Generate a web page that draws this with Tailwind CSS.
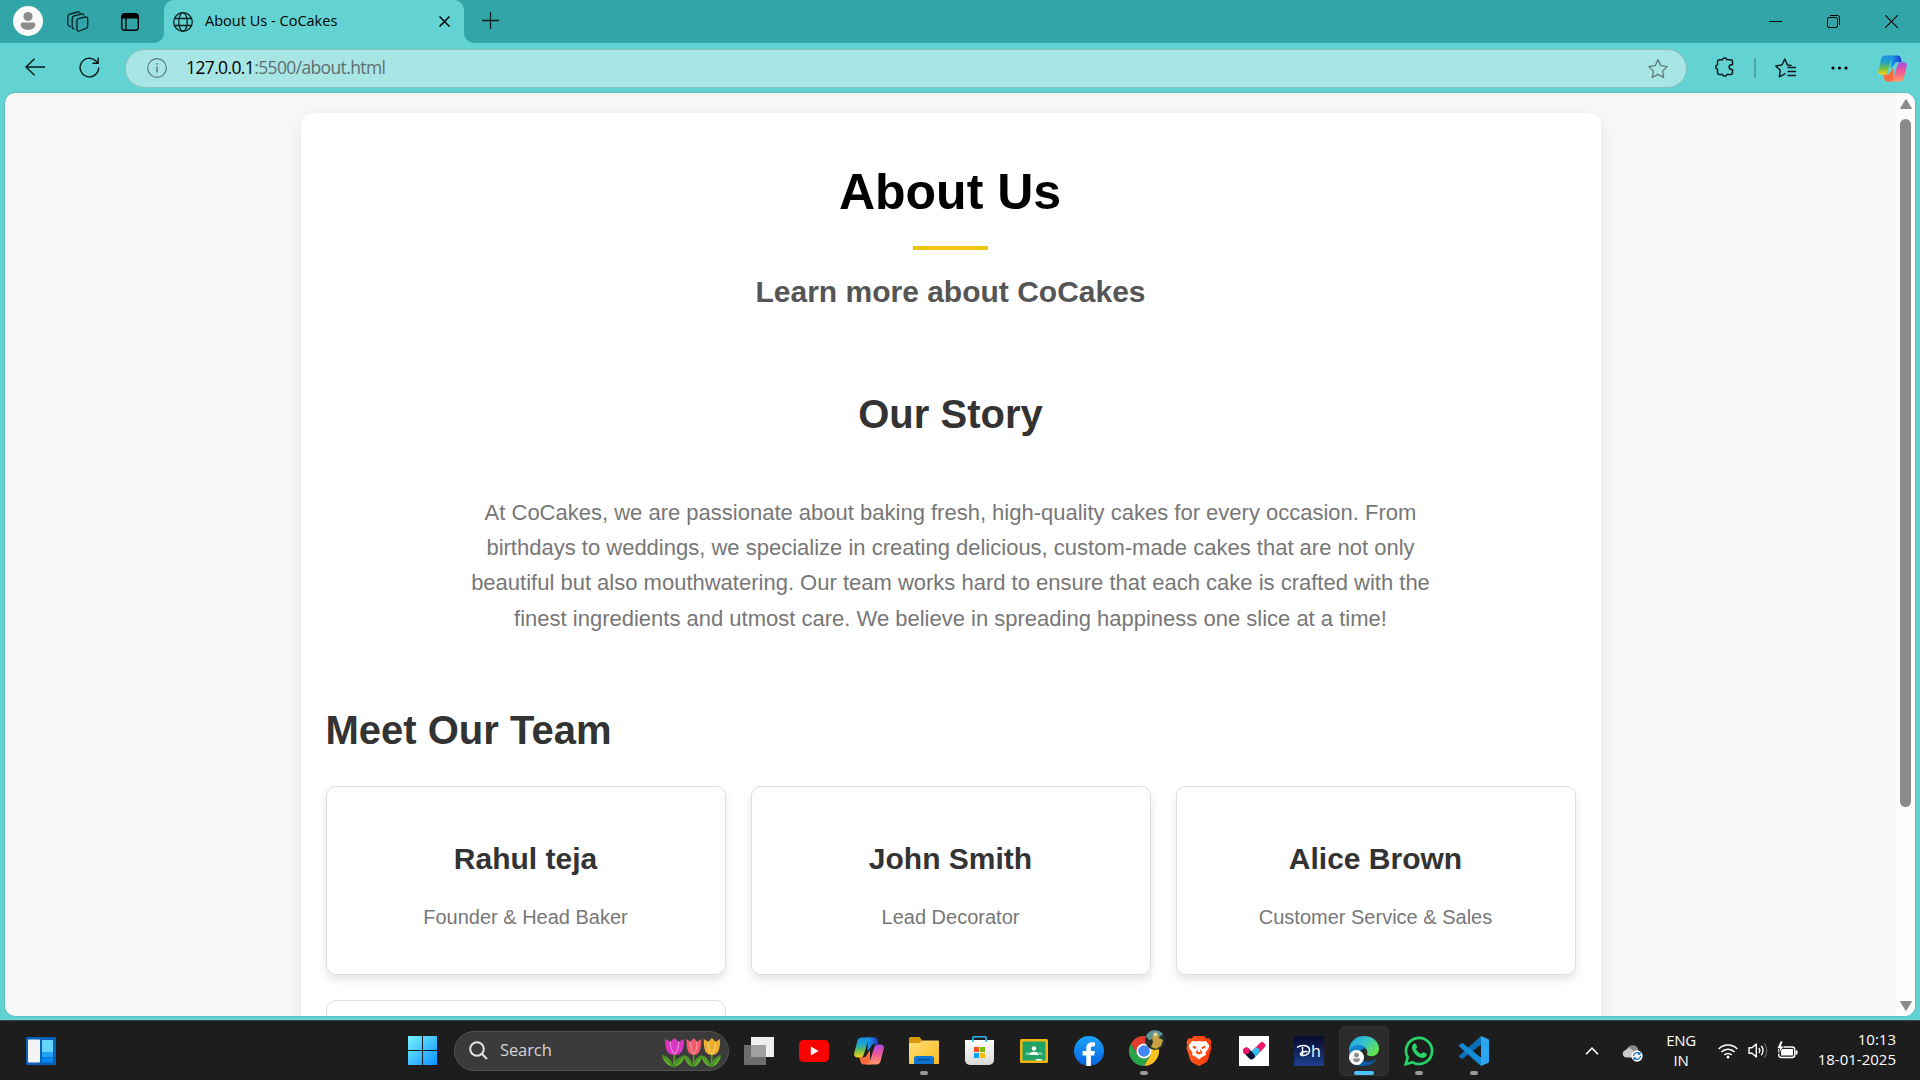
<!DOCTYPE html>
<html lang="en">
<head>
<meta charset="utf-8">
<title>About Us - CoCakes</title>
<script src="https://cdn.jsdelivr.net/npm/@tailwindcss/browser@4"></script>
</head>
<body class="w-[1920px] h-[1080px] overflow-hidden flex flex-col bg-[#63d2d2] font-['Open_Sans',sans-serif]">
<svg class="absolute w-0 h-0">
  <defs>
    <linearGradient id="cA" x1="0" y1="0" x2="0" y2="1"><stop offset="0" stop-color="#1a8fe8"/><stop offset=".35" stop-color="#1fa3c8"/><stop offset=".65" stop-color="#6cbf4a"/><stop offset="1" stop-color="#ffd21a"/></linearGradient>
    <linearGradient id="cB" x1="0" y1="0" x2="0" y2="1"><stop offset="0" stop-color="#a24bea"/><stop offset=".45" stop-color="#f0559a"/><stop offset="1" stop-color="#ff9a66"/></linearGradient>
    <linearGradient id="cC" x1="0" y1="0" x2="1" y2="0"><stop offset="0" stop-color="#1c9cf0"/><stop offset="1" stop-color="#1a35c4"/></linearGradient>
    <linearGradient id="win" gradientUnits="userSpaceOnUse" x1="0" y1="0" x2="29" y2="29"><stop offset="0" stop-color="#78f2ff"/><stop offset="1" stop-color="#0a93ff"/></linearGradient>
    <linearGradient id="fold" x1="0" y1="0" x2="1" y2="1"><stop offset="0" stop-color="#ffe07a"/><stop offset="1" stop-color="#fcb91c"/></linearGradient>
    <linearGradient id="fb" x1="0" y1="0" x2="0" y2="1"><stop offset="0" stop-color="#19a5fb"/><stop offset="1" stop-color="#0862e0"/></linearGradient>
    <linearGradient id="dh" x1="0" y1="0" x2="0" y2="1"><stop offset="0" stop-color="#060a2c"/><stop offset="1" stop-color="#1d3f90"/></linearGradient>
    <linearGradient id="edge" x1="0" y1="0" x2="1" y2=".6"><stop offset="0" stop-color="#1b9de2"/><stop offset=".5" stop-color="#35c3cf"/><stop offset="1" stop-color="#63e34e"/></linearGradient>
    <linearGradient id="bag" x1="0" y1="0" x2="0" y2="1"><stop offset="0" stop-color="#fff"/><stop offset="1" stop-color="#d8d8d8"/></linearGradient>
    <linearGradient id="brave" x1="0" y1="0" x2="1" y2="0"><stop offset="0" stop-color="#ff5a1f"/><stop offset="1" stop-color="#ff3a05"/></linearGradient>
    <symbol id="copilot" viewBox="0 0 30 28">
      <path d="M14 .5h6.500c2 0 2.500 1 3 2.800l1.100 4h-4.400c-1.700 0-2.600.8-3.200 2.500L13.500 14z" fill="url(#cC)"/>
      <path d="M16 27.500H10c-2.300 0-3-1.200-3.500-3l-1.200-4.200h4.400c1.700 0 2.600-.8 3.100-2.500L16 13z" fill="#ff6a3c"/>
      <path d="M7.500.5h10.200c-2 0-2.900 1.200-3.500 3l-4.400 14c-.6 1.900-1.500 3-3.600 3H3.400C.8 20.500-.3 18.400.3 16l3-11.800C3.900 1.800 5.200.5 7.500.5z" fill="url(#cA)"/>
      <path d="M22.500 27.500H12.300c2 0 2.900-1.200 3.500-3l4.400-14c.6-1.900 1.500-3 3.600-3h2.800c2.600 0 3.700 2.100 3.100 4.500l-3 11.800c-.6 2.400-1.900 3.700-4.200 3.700z" fill="url(#cB)"/>
    </symbol>
    <symbol id="tulip" viewBox="0 0 22 32" preserveAspectRatio="none">
      <path d="M12 16c0 6-.5 11-1 15" stroke="#4f9a25" stroke-width="2" fill="none"/>
      <path d="M11 31C4 29 1 24 0 18c5 1 9 5 11 13zM11 31c1-7 5-11 11-13-1 7-4 11-11 13z" fill="#62a82d"/>
      <path d="M11 31C8 26 5 22 0 18M11 31c3-5 6-9 11-13" stroke="#2f7a1c" fill="none"/>
      <path d="M12 18C5 18 3 13 3 1l5 3 4-4 4 4 5-3c0 12-2 17-9 17z" fill="currentColor"/>
      <path d="M8 4c0 6 1 10 4 13 3-3 4-7 4-13" stroke="#fff" stroke-opacity=".45" fill="none"/>
    </symbol>
  </defs>
</svg>

<!-- Tab strip -->
<header class="h-[43px] shrink-0 bg-[#31a5a8] flex items-start">
  <div class="w-[164px] h-full flex items-center pl-[13px] relative">
    <svg class="size-[30px] -mt-px" viewBox="0 0 30 30"><circle cx="15" cy="15" r="15" fill="#fafafa"/><circle cx="15" cy="10.500" r="4.600" fill="#8c8c8c"/><path d="M9.500 16.500h11a1.800 1.800 0 0 1 1.800 1.800c0 3.600-3 5.700-7.300 5.700s-7.300-2.100-7.300-5.700a1.800 1.800 0 0 1 1.800-1.800z" fill="#8c8c8c"/></svg>
    <svg class="w-[22px] h-[21px] ml-6 -mt-px" viewBox="0 0 22 21" fill="none" stroke="#0b2020" stroke-width="1.300" stroke-linecap="round"><path d="M11.300 7.600 18.500 6c1.300-.3 2.200.5 2.200 1.700v7.500c0 1-.6 1.800-1.500 2.100L12.200 20c-1.300.4-2.300-.4-2.300-1.700V9.500c0-1 .5-1.600 1.400-1.900z"/><path d="M7 18c-1.200-.2-1.800-1-1.800-2V7.300c0-1.300.6-2.200 1.800-2.500L14.500 3c1-.2 1.900.2 2.400 1"/><path d="M3 15.500c-1.400-.3-2.200-1-2.200-2.200V5.500c0-1.300.7-2.100 1.900-2.400L10.500 1c1-.3 1.900 0 2.400.7"/></svg>
    <svg class="w-[18px] h-[18px] ml-8" viewBox="0 0 18 18"><rect x=".7" y=".7" width="16.600" height="16.600" rx="2.800" fill="none" stroke="#000" stroke-width="1.400"/><path d="M1 1h16v4.500H1z"/><path d="M5 5v12" stroke="#000" stroke-width="1.300"/></svg>
    <svg class="absolute right-0 bottom-0 size-2.5" viewBox="0 0 10 10"><path d="M10 0v10H0A10 10 0 0 0 10 0z" fill="#63d2d2"/></svg>
  </div>
  <div class="w-[300px] h-full bg-[#63d2d2] rounded-t-[10px] flex items-center px-[9px] relative">
    <svg class="size-5" viewBox="0 0 20 20" fill="none" stroke="#0b2020" stroke-width="1.300"><circle cx="10" cy="10" r="9.300"/><ellipse cx="10" cy="10" rx="4.200" ry="9.300"/><path d="M1.500 6.500h17M1.500 13.500h17"/></svg>
    <span class="ml-3 -mt-0.5 text-[14.5px] tracking-[0.02px] text-black whitespace-nowrap">About Us - CoCakes</span>
    <svg class="size-[11px] ml-auto mr-[5px]" viewBox="0 0 11 11" stroke="#000" stroke-width="1.500"><path d="M.5.5l10 10M10.500.5l-10 10"/></svg>
    <svg class="absolute -right-2.5 bottom-0 size-2.5" viewBox="0 0 10 10"><path d="M0 0v10h10A10 10 0 0 1 0 0z" fill="#63d2d2"/></svg>
  </div>
  <svg class="size-[17px] ml-[18px] mt-[12px]" viewBox="0 0 17 17" stroke="#0b2020" stroke-width="1.300"><path d="M8.500 0v17M0 8.500h17"/></svg>
  <div class="ml-auto h-full flex items-center mr-[22px] gap-[45px]">
    <svg class="w-[13px] h-[13px]" viewBox="0 0 13 13" stroke="#000"><path d="M0 6.500h13"/></svg>
    <svg class="w-[13px] h-[13px]" viewBox="0 0 13 13" fill="none" stroke="#000"><rect x=".5" y="2.500" width="10" height="10" rx="1.500"/><path d="M3 .5h7.500a2 2 0 0 1 2 2V10"/></svg>
    <svg class="w-[13px] h-[13px]" viewBox="0 0 13 13" stroke="#000" stroke-width="1.100"><path d="M0 0l13 13M13 0L0 13"/></svg>
  </div>
</header>

<!-- Toolbar -->
<nav class="h-[50px] shrink-0 flex items-center pl-[25px] pr-[13px]">
  <svg class="w-5 h-[18px] -mt-0.5" viewBox="0 0 20 18" fill="none" stroke="#0b1a1a" stroke-width="1.400"><path d="M20 9H1M9.500.7L1 9l8.500 8.300"/></svg>
  <svg class="size-[21px] ml-[34px] -mt-px" viewBox="0 0 21 21" fill="none" stroke="#0b1a1a" stroke-width="1.400"><path d="M19.700 10.500a9.300 9.300 0 1 1-3-6.800L19 6.200M19.200.5v5.800h-5.800"/></svg>
  <div class="ml-[25px] w-[1562px] h-[39px] rounded-full bg-[#a8e6e5] border border-[#8bbfbe] flex items-center pl-[21px] pr-[18px]">
    <svg class="size-5" viewBox="0 0 20 20" fill="none" stroke="#5c7a7a" stroke-width="1.200"><circle cx="10" cy="10" r="9.300"/><path d="M10 8.500v6M10 5v1.700" stroke-width="1.500"/></svg>
    <span class="ml-[19px] -mt-0.5 text-[17.5px] tracking-[-0.63px] text-black whitespace-nowrap">127.0.0.1<span class="text-[#5f6f70]">:5500/about.html</span></span>
    <svg class="w-5 h-[19px] ml-auto" viewBox="0 0 20 19" fill="none" stroke="#5c7a7a" stroke-width="1.300" stroke-linejoin="round"><path d="M10 .8l2.800 5.900 6.400.9-4.600 4.500 1.100 6.300L10 15.400l-5.700 3 1.100-6.300L.8 7.600l6.400-.9z"/></svg>
  </div>
  <svg class="w-[19px] h-5 ml-[28px] -mt-0.5" viewBox="0 0 19 20" fill="none" stroke="#0b1a1a" stroke-width="1.500" stroke-linejoin="round"><path d="M4.500 2.800h3a2.300 2.300 0 0 1 4.500 0h3.500a2 2 0 0 1 2 2v2.900h-1a2.400 2.400 0 0 0 0 4.800h1v2.900a2 2 0 0 1-2 2H12a2.300 2.300 0 0 1-4.500 0h-3a2 2 0 0 1-2-2v-3.100a2.300 2.300 0 0 1 0-4.500v-3a2 2 0 0 1 2-2z"/></svg>
  <div class="w-0.5 h-5 bg-[#4ea3a4] ml-5"></div>
  <svg class="w-[21px] h-5 ml-[19px] -mt-px" viewBox="0 0 21 20" fill="none" stroke="#0b1a1a" stroke-width="1.400" stroke-linejoin="round"><path d="M13 7.200l-.5-.1L9.800 1 7 7 .8 7.900l4.500 4.400-1 6.500 5.500-3 .7.300"/><path d="M12.500 9.500H21M12.500 13.500H21M12.500 17.500H21M13 7.200l3.500.3"/></svg>
  <svg class="w-[17px] h-1 ml-[35px] -mt-px" viewBox="0 0 17 4"><circle cx="2" cy="2" r="1.600"/><circle cx="8.500" cy="2" r="1.600"/><circle cx="15" cy="2" r="1.600"/></svg>
  <svg class="w-[29px] h-[27px] ml-auto"><use href="#copilot"/></svg>
</nav>

<!-- Page viewport -->
<div class="mx-[5px] h-[923px] shrink-0 rounded-[10px] overflow-hidden bg-[#f8f8f8] flex shadow-[0_0_2px_rgba(0,0,0,0.25)] font-['Liberation_Sans',sans-serif]">
  <main class="flex-1 pl-[295.5px] pt-5">
    <section class="w-[1300px] h-[1100px] bg-white rounded-xl shadow-[0_5px_19px_rgba(0,0,0,0.08)] px-[25px] pt-[49px]">
      <h1 class="text-[50px] leading-[60px] font-bold text-black text-center -ml-px">About Us</h1>
      <div class="w-[75px] h-1 bg-[#f1c40f] mx-auto mt-6 relative -left-[0.5px]"></div>
      <h3 class="mt-[22px] text-[30px] leading-10 font-bold text-[#555] text-center">Learn more about CoCakes</h3>
      <h2 class="mt-[77px] text-[40px] leading-[50px] font-bold text-[#333] text-center">Our Story</h2>
      <p class="mt-14 w-[1000px] mx-auto text-[22px] leading-[35.2px] text-[#777] text-center">At CoCakes, we are passionate about baking fresh, high-quality cakes for every occasion. From birthdays to weddings, we specialize in creating delicious, custom-made cakes that are not only beautiful but also mouthwatering. Our team works hard to ensure that each cake is crafted with the finest ingredients and utmost care. We believe in spreading happiness one slice at a time!</p>
      <h2 class="mt-[69px] text-[40px] leading-[50px] font-bold text-[#333]">Meet Our Team</h2>
      <div class="mt-[31px] grid grid-cols-3 gap-[25px] text-center">
        <article class="h-[189px] rounded-[10px] border border-[#ddd] shadow-[0_5px_8px_rgba(0,0,0,0.1)] pt-[52px]"><h3 class="text-[30px] leading-10 font-bold text-[#333]">Rahul teja</h3><p class="mt-[23px] text-[20px] leading-[30px] text-[#777]">Founder &amp; Head Baker</p></article>
        <article class="h-[189px] rounded-[10px] border border-[#ddd] shadow-[0_5px_8px_rgba(0,0,0,0.1)] pt-[52px]"><h3 class="text-[30px] leading-10 font-bold text-[#333]">John Smith</h3><p class="mt-[23px] text-[20px] leading-[30px] text-[#777]">Lead Decorator</p></article>
        <article class="h-[189px] rounded-[10px] border border-[#ddd] shadow-[0_5px_8px_rgba(0,0,0,0.1)] pt-[52px]"><h3 class="text-[30px] leading-10 font-bold text-[#333]">Alice Brown</h3><p class="mt-[23px] text-[20px] leading-[30px] text-[#777]">Customer Service &amp; Sales</p></article>
        <article class="h-[189px] rounded-[10px] border border-[#ddd]"></article>
      </div>
    </section>
  </main>
  <div class="w-[19px] h-full bg-[#fcfcfc] flex flex-col items-center pt-1.5 pb-[5px]">
    <svg class="w-3 h-[10px] shrink-0" viewBox="0 0 12 10"><path d="M6 .5L11.500 9.500H.5z" fill="#8b8b8b" stroke="#8b8b8b" stroke-linejoin="round"/></svg>
    <div class="w-[11px] h-[688px] mt-[10px] rounded-full bg-[#8b8b8b]"></div>
    <svg class="w-3 h-[10px] mt-auto shrink-0" viewBox="0 0 12 10"><path d="M6 9.500L11.500.5H.5z" fill="#8b8b8b" stroke="#8b8b8b" stroke-linejoin="round"/></svg>
  </div>
</div>

<!-- Taskbar -->
<footer class="mt-1 h-[60px] shrink-0 bg-[#1d1d1d] border-t border-[#3a4444] flex items-center text-white">
  <svg class="w-[30px] h-7 ml-[26px]" viewBox="0 0 30 28"><rect width="30" height="28" rx="1.500" fill="#0a62b8"/><rect x="2" y="2.500" width="12" height="23" rx="1" fill="#f3f3f3"/><path d="M16 3h11v12H16z" fill="#66d6ff"/><path d="M16 15h11v5H16z" fill="#1fa2f8"/><path d="M16 20.500h11v5H16z" fill="#0788ee"/></svg>
  <svg class="size-[29px] ml-[352px]" viewBox="0 0 29 29"><path d="M0 0h14v14H0zM15 0h14v14H15zM0 15h14v14H0zM15 15h14v14H15z" fill="url(#win)"/></svg>
  <div class="ml-[17px] w-[275px] h-10 rounded-full bg-[#3b3b3b] border border-[#505050] flex items-center pl-[14px] pr-[7px]">
    <svg class="size-[19px]" viewBox="0 0 19 19" fill="none" stroke="#e4e4e4" stroke-width="2"><circle cx="8" cy="8" r="6.800"/><path d="M13 13l5 5"/></svg>
    <span class="ml-3 text-[16.5px] tracking-[-0.1px] text-[#d4d4d4]">Search</span>
    <div class="ml-auto mt-1 flex items-center -space-x-px">
      <svg class="w-[23px] h-[30px] text-[#d838c0]"><use href="#tulip"/></svg>
      <svg class="w-[18px] h-[30px] text-[#ef5c6c]"><use href="#tulip"/></svg>
      <svg class="w-[20px] h-[30px] text-[#eeb02c]"><use href="#tulip"/></svg>
    </div>
  </div>
  <div class="ml-[5px] h-full flex items-center [&>div]:relative [&>div]:w-[50px] [&>div]:h-[50px] [&>div]:mr-[5px] [&>div]:flex [&>div]:items-center [&>div]:justify-center">
    <div><svg class="w-[30px] h-7" viewBox="0 0 30 28"><path d="M7 0h23v20H7z" fill="#efefef"/><path d="M0 8h22v20H0z" fill="#6d6d6d"/><path d="M7 8h15v12H7z" fill="#a0a0a0"/></svg></div>
    <div><svg class="w-[30px] h-[22px]" viewBox="0 0 30 22"><rect width="30" height="22" rx="4.500" fill="#f00"/><path d="M11.800 6.500v9l7.700-4.500z" fill="#fff"/></svg></div>
    <div><svg class="w-[30px] h-[28px]"><use href="#copilot"/></svg></div>
    <div><svg class="w-[30px] h-[27px]" viewBox="0 0 30 27"><path d="M0 1.500A1.500 1.500 0 0 1 1.500 0h9L13 3v4H0z" fill="#d89a0b"/><path d="M0 6h10.500L13.500 3.500H29a1 1 0 0 1 1 1V26a1 1 0 0 1-1 1H1a1 1 0 0 1-1-1z" fill="url(#fold)"/><path d="M5 27v-5.500a2.500 2.500 0 0 1 2.500-2.500h15a2.500 2.500 0 0 1 2.500 2.500V27z" fill="#0f74cf"/><path d="M9 22.700h12" stroke="#0a4c94" stroke-width="1.300"/></svg><i class="absolute bottom-[1px] w-2 h-1 rounded-full bg-[#9a9a9a]"></i></div>
    <div><svg class="w-[29px] h-[29px]" viewBox="0 0 29 29"><path d="M0 4h29v20a5 5 0 0 1-5 5H5a5 5 0 0 1-5-5z" fill="url(#bag)"/><path d="M7.800 6V2a1.200 1.200 0 0 1 1.200-1.200h11A1.200 1.200 0 0 1 21.200 2v4" fill="none" stroke="#2cb5ef" stroke-width="1.600"/><path d="M9 11h5v5H9z" fill="#f25022"/><path d="M15 11h5v5h-5z" fill="#7fba00"/><path d="M9 17h5v5H9z" fill="#00a4ef"/><path d="M15 17h5v5h-5z" fill="#ffb900"/></svg></div>
    <div><svg class="w-7 h-6" viewBox="0 0 28 24"><rect width="28" height="24" rx="1.500" fill="#f4b50f"/><path d="M2.500 2.500h23v19h-23z" fill="#21a366"/><g fill="#fff"><circle cx="14" cy="9.500" r="2.200"/><path d="M9 16c0-4.500 10-4.500 10 0z"/><path d="M16 20h6v1.500h-6z"/></g><path d="M5.500 16c0-3 3-3.500 4-2.500L8.500 16zM22.500 16c0-3-3-3.500-4-2.500l1 2.500z" fill="#7cc9a2"/></svg></div>
    <div><svg class="size-[30px]" viewBox="0 0 30 30"><circle cx="15" cy="15" r="15" fill="url(#fb)"/><path d="M12.300 30V19.500H8.600V15h3.700v-2.500c0-4.200 2-6.300 5.700-6.300 1.500 0 3 .3 3 .3v3.700h-1.900c-1.900 0-2.200 1-2.200 2.200V15h4l-.7 4.500h-3.300V30z" fill="#fff"/></svg></div>
    <div><svg class="size-[30px]" viewBox="0 0 30 30"><path d="M28 7.500A15 15 0 0 1 15 30l6.500-11L15 8h13z" fill="#fcc31e"/><path d="M2 7.500A15 15 0 0 0 15 30l6.500-11H9z" fill="#2ba24c"/><path d="M2 7.500A15 15 0 0 1 28 7.500H15L9 19z" fill="#e33b2e"/><circle cx="15" cy="15" r="7.500" fill="#fff"/><circle cx="15" cy="15" r="5.800" fill="#4285f4"/></svg>
      <svg class="absolute left-[26px] top-[4px] size-5" viewBox="0 0 20 20"><circle cx="10" cy="10" r="10" fill="#25302f"/><path d="M1 6A10 10 0 0 1 18 4l-5 4-9 2z" fill="#5d9491"/><path d="M9 3l4 1 1 4 4 2-2 6-5 3-5-2 2-5-1-4z" fill="#c7a23e"/><circle cx="10.500" cy="4.500" r="2" fill="#e7d39a"/></svg><i class="absolute bottom-[1px] w-2 h-1 rounded-full bg-[#9a9a9a]"></i></div>
    <div><svg class="w-[26px] h-[30px]" viewBox="0 0 26 30"><path d="M8 0h10l2.500 2.500 3-.3 2 3.800-.8 3 .8 3-3.500 11.500c-.5 1.500-1.500 2.500-3 3.500l-6 3-6-3c-1.500-1-2.500-2-3-3.500L.5 12l.8-3-.8-3 2-3.800 3 .3z" fill="url(#brave)"/><path d="M6 5l4 .6L13 5l3 .6L20 5l3.200 4.500-.7 3-3 4 .5 2.500-4 2-3 2.500L10 21l-4-2 .5-2.500-3-4-.7-3z" fill="#fff"/><path d="M6.500 9.500l4 1.500-.5 2-3-1zM19.500 9.500l-4 1.500.5 2 3-1zM11.500 13l-2 4 3.500 1.500 3.500-1.500-2-4-.5 3h-2z" fill="#ff4a12"/></svg></div>
    <div><svg class="size-[30px]" viewBox="0 0 30 30"><path d="M0 0h30v30H0z" fill="#fff"/><g stroke-linecap="round" stroke-width="6.500"><path d="M12.500 20L23 9.500" stroke="#ee1767"/><path d="M12.500 20l5-5" stroke="#2fc0f0"/><path d="M7.500 15l5 5" stroke="#10123a"/><path d="M7.300 14.800h.1" stroke="#ee1767"/></g></svg></div>
    <div><svg class="size-[30px]" viewBox="0 0 30 30"><path d="M0 0h30v30H0z" fill="url(#dh)"/><path d="M3 11.500c5-3.500 13-2 12.500 3 0 4-6 6-8.500 4.500-2-1.500 1-3.500 6.500-3.500M8.500 11v9" fill="none" stroke="#fff" stroke-width="1.500"/><text x="17" y="20.500" font-family="Open Sans" font-size="16" fill="#fff">h</text></svg></div>
    <div class="rounded-md bg-[#2b2b2b] border border-[#343434]"><svg class="size-[30px]" viewBox="0 0 30 30"><path d="M0 15C0 6 6.500 0 15 0c9 0 15 6 15 12.500 0 5-3.500 7.700-7.500 7.700-3 0-5-1-4.500-2.200 1.500-3-1-7-6-7-5.500 0-11.500 2.500-12 4z" fill="url(#edge)"/><path d="M0 15c1.500-4.500 6-6 10-6 3 0 6 1.500 7 3-4 0-6.500 3-6.500 6.500 0 4 3 8.500 8.500 9-8 6-19 0-19-12.500z" fill="#1683d2"/><path d="M10.500 17c-.5 5 4 9 9 8.500 3.500 0 6.500-2 8-3C25 28 20 30 15 30c-5-1-8-8-4.500-13z" fill="#0d58a4"/></svg>
      <svg class="absolute left-[9px] top-[23px] size-[15px]" viewBox="0 0 15 15"><circle cx="7.500" cy="7.500" r="7.500" fill="#fff"/><circle cx="7.500" cy="5.200" r="2.400" fill="#8a8a8a"/><path d="M4 8.500h7c0 5-7 5-7 0z" fill="#8a8a8a"/></svg><i class="absolute bottom-0 w-5 h-1 rounded-full bg-[#4cc2ff]"></i></div>
    <div><svg class="size-[30px]" viewBox="0 0 30 30"><path d="M1.800 28.200l1.900-6.800A13 13 0 1 1 8.600 26.300z" fill="none" stroke="#25d366" stroke-width="2.700"/><path d="M10.500 7.500c.8-.2 1.300 0 1.600.8l1 2.500c.2.600-.1 1-1.300 2.300 1.300 2.300 3 3.800 5.400 4.900 1.500-1.800 1.800-2 2.500-1.700l2.600 1.300c.7.400.7.800.3 2-.6 1.700-2.500 2.600-4.400 2.400C13 21.300 8 15.500 8 11.700c0-1.900 1-3.700 2.500-4.200z" fill="#25d366"/></svg><i class="absolute bottom-[1px] w-2 h-1 rounded-full bg-[#9a9a9a]"></i></div>
    <div><svg class="size-[30px]" viewBox="0 0 30 30"><path d="M22 0v8.500L3.500 23 .6 21.500c-.8-.6-.8-1.500 0-2.200z" fill="#0a6fb8"/><path d="M22 30v-8.500L3.500 7 .6 8.500c-.8.600-.8 1.500 0 2.200z" fill="#138bd6"/><path d="M22 0l7 3c.7.300 1 .8 1 1.500v21c0 .7-.3 1.200-1 1.500l-7 3z" fill="#2aa6f2"/></svg><i class="absolute bottom-[1px] w-2 h-1 rounded-full bg-[#9a9a9a]"></i></div>
  </div>
  <div class="ml-auto h-full flex items-center pr-6 text-[15px] leading-5">
    <svg class="w-[14px] h-2" viewBox="0 0 14 8" fill="none" stroke="#fff" stroke-width="1.600"><path d="M1 7.200L7 1.200l6 6"/></svg>
    <svg class="w-[21px] h-[18px] ml-[23px] mt-1" viewBox="0 0 21 18"><path d="M5 13a5 5 0 0 1 0-8C7 0 16 0 16 6v7z" fill="#8c8c8c"/><path d="M4 13.500a3.800 3.800 0 0 1 0-7.500c2-3 6-1.500 7 1.500l3 6z" fill="#c9c9c9"/><circle cx="15" cy="12" r="5.700" fill="#fff"/><path d="M11.500 12a3.500 3.500 0 0 1 6-2.300M18.500 12a3.500 3.500 0 0 1-6 2.300M18 8v2.200h-2.200M12 16v-2.200h2.200" fill="none" stroke="#1173c8" stroke-width="1.200"/></svg>
    <div class="ml-[23px] -mt-0.5 w-[30px] flex flex-col items-center tracking-[-0.3px]"><span>ENG</span><span>IN</span></div>
    <svg class="w-5 h-4 ml-[22px]" viewBox="0 0 20 16" fill="none" stroke="#fff" stroke-width="1.500"><path d="M.7 6a13 13 0 0 1 18.600 0M3.500 9a9 9 0 0 1 13 0M6.300 12a5.200 5.200 0 0 1 7.400 0"/><circle cx="10" cy="14" r="1.500" fill="#fff" stroke="none"/></svg>
    <svg class="w-5 h-[17px] ml-[10px]" viewBox="0 0 20 17" fill="none" stroke="#fff" stroke-width="1.400"><path d="M1 5.800h3L8.300 2v13L4 11.200H1z" stroke-linejoin="round"/><path d="M10.800 6a4 4 0 0 1 0 5M13.200 3.800a7 7 0 0 1 0 9.400"/><path d="M16 1.500a10 10 0 0 1 0 14" stroke="#5c5c5c"/></svg>
    <svg class="w-[21px] h-[18px] ml-[9px] -mt-0.5" viewBox="0 0 21 18"><rect x="1.700" y="6" width="16" height="10.500" rx="2.500" fill="none" stroke="#fff" stroke-width="1.400"/><path d="M4 8h12v6.500H4zM18.500 9.500h2v4h-2z" fill="#fff"/><path d="M3.500 0L0 7.500h2.700L1.500 13 7 5H4.300L6 0z" fill="#fff" stroke="#1d1d1d" stroke-width=".7"/></svg>
    <div class="ml-5 -mt-1 w-[78px] flex flex-col items-end whitespace-nowrap"><span>10:13</span><span>18-01-2025</span></div>
  </div>
</footer>
</body>
</html>
